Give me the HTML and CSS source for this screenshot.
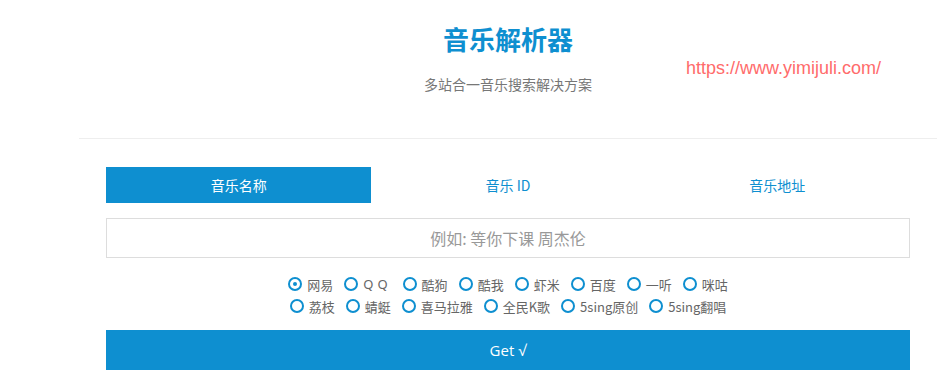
FILE: index.html
```html
<!DOCTYPE html>
<html lang="zh-CN">
<head>
    <meta charset="UTF-8">
    <meta name="viewport" content="width=device-width, initial-scale=1.0">
    <title>音乐解析器</title>
    <link rel="stylesheet" href="styles.css">
</head>
<body>

<div class="page">
    <div class="header">
        <h1 class="title">音乐解析器</h1>
        <p class="subtitle">多站合一音乐搜索解决方案</p>
        <span class="site-url">https://www.yimijuli.com/</span>
    </div>

    <div class="content">
        <div class="tabs">
            <div class="tab active">音乐名称</div>
            <div class="tab">音乐 ID</div>
            <div class="tab">音乐地址</div>
        </div>

        <input class="search-input" type="text" placeholder="例如: 等你下课 周杰伦">

        <div class="sources">
            <div class="source-row">
                <label class="source"><span class="radio checked"></span>网易</label>
                <label class="source"><span class="radio"></span><span class="qq">QQ</span></label>
                <label class="source"><span class="radio"></span>酷狗</label>
                <label class="source"><span class="radio"></span>酷我</label>
                <label class="source"><span class="radio"></span>虾米</label>
                <label class="source"><span class="radio"></span>百度</label>
                <label class="source"><span class="radio"></span>一听</label>
                <label class="source"><span class="radio"></span>咪咕</label>
            </div>
            <div class="source-row">
                <label class="source"><span class="radio"></span>荔枝</label>
                <label class="source"><span class="radio"></span>蜻蜓</label>
                <label class="source"><span class="radio"></span>喜马拉雅</label>
                <label class="source"><span class="radio"></span>全民K歌</label>
                <label class="source"><span class="radio"></span>5sing原创</label>
                <label class="source"><span class="radio"></span>5sing翻唱</label>
            </div>
        </div>

        <button class="get-btn">Get √</button>
    </div>
</div>

</body>
</html>
```

FILE: styles.css
```css
body {
    margin: 0;
    padding: 0;
    background: #fff;
    font-family: "Noto Sans CJK SC", "Noto Sans", sans-serif;
}
.page {
    width: 858px;
    margin-left: 79px;
}
.header {
    position: relative;
    height: 138px;
    border-bottom: 1px solid #eee;
    text-align: center;
}
.title {
    margin: 0;
    padding-top: 20px;
    font-size: 26px;
    line-height: 38px;
    font-weight: bold;
    color: #0e8fd0;
}
.subtitle {
    margin: 16px 0 0;
    font-size: 14px;
    line-height: 20px;
    color: #777;
}
.site-url {
    position: absolute;
    left: 607px;
    top: 58px;
    font-family: "Liberation Sans", Arial, sans-serif;
    font-size: 18px;
    color: #ff6b6b;
}
.content {
    padding: 28px 27px 0;
}
.tabs {
    display: grid;
    grid-template-columns: repeat(3, 1fr);
    gap: 4px;
}
.tab {
    height: 36px;
    line-height: 36px;
    text-align: center;
    font-size: 14px;
    color: #0e8fd0;
}
.tab.active {
    background-color: #0e8fd0;
    color: #fff;
}
.search-input {
    display: block;
    box-sizing: border-box;
    width: 100%;
    height: 40px;
    margin-top: 15px;
    border: 1px solid #ddd;
    outline: none;
    text-align: center;
    font-family: "Noto Sans CJK SC", sans-serif;
    font-size: 16px;
    color: #333;
}
.search-input::placeholder {
    color: #999;
}
.sources {
    padding-top: 15px;
}
.source-row {
    display: flex;
    justify-content: center;
    gap: 11px;
    height: 22px;
    align-items: center;
}
.source {
    display: flex;
    align-items: center;
    font-size: 13px;
    color: #666;
}
.radio {
    box-sizing: border-box;
    width: 14px;
    height: 14px;
    margin-right: 5px;
    border: 2px solid #0e8fd0;
    border-radius: 50%;
    position: relative;
}
.radio.checked::after {
    content: "";
    position: absolute;
    left: 3px;
    top: 3px;
    width: 4px;
    height: 4px;
    border-radius: 50%;
    background: #0e8fd0;
}
.qq {
    letter-spacing: 4px;
    font-family: "Noto Sans", sans-serif;
}
.get-btn {
    display: block;
    width: 100%;
    height: 40px;
    margin-top: 13px;
    border: none;
    background-color: #0e8fd0;
    color: #fff;
    font-family: "Open Sans", sans-serif;
    font-size: 15px;
    cursor: pointer;
}
```
